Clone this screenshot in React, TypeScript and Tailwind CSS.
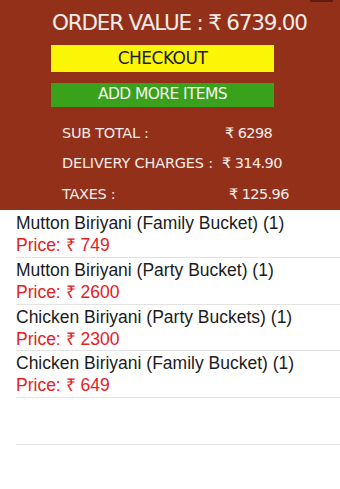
import React from "react";

const items = [
  { name: "Mutton Biriyani (Family Bucket) (1)", price: "749" },
  { name: "Mutton Biriyani (Party Bucket) (1)", price: "2600" },
  { name: "Chicken Biriyani (Party Buckets) (1)", price: "2300" },
  { name: "Chicken Biriyani (Family Bucket) (1)", price: "649" },
];

export default function App() {
  return (
    <div className="w-[340px] h-[489px] bg-white overflow-hidden relative">
      <div className="absolute right-[7px] top-0 w-[23px] h-[2px] bg-[#5e1b10]" />
      <div
        className="h-[210px] bg-[#93301a] pl-[51px] pt-[8px] flex flex-col"
        style={{ fontFamily: '"DejaVu Sans", "Noto Sans", sans-serif' }}
      >
        <div className="text-[21.5px] leading-[30px] text-[#f4ebe6] pl-[1px] tracking-[-1.2px] whitespace-nowrap">
          ORDER VALUE : ₹ 6739.00
        </div>
        <div className="mt-[7px] w-[223px] h-[28px] bg-[#fbf605] flex items-center justify-center text-[17px] text-[#1d1b3d] tracking-[-0.5px]">
          CHECKOUT
        </div>
        <div className="mt-[11px] w-[223px] h-[25px] bg-[#3aa11d] flex items-center justify-center text-[15.5px] text-[#f4f4ec] tracking-[-0.6px]">
          ADD MORE ITEMS
        </div>
        <div className="mt-[12px] pl-[11px] flex flex-col text-[14.5px] text-[#f6ede8]">
          <div className="h-[30.5px] flex items-center">
            <span className="w-[163px] tracking-[-0.3px]">SUB TOTAL :</span>
            <span className="tracking-[-0.6px]">₹ 6298</span>
          </div>
          <div className="h-[30.5px] flex items-center">
            <span className="w-[160px] tracking-[-0.2px]">DELIVERY CHARGES :</span>
            <span className="tracking-[-0.6px]">₹ 314.90</span>
          </div>
          <div className="h-[30.5px] flex items-center">
            <span className="w-[167px] tracking-[-0.3px]">TAXES :</span>
            <span className="tracking-[-0.6px]">₹ 125.96</span>
          </div>
        </div>
      </div>
      <div
        className="pt-[1px] flex flex-col"
        style={{ fontFamily: '"Liberation Sans", Arial, sans-serif' }}
      >
        {items.map((it) => (
          <div key={it.name} className="pl-[16px]">
            <div className="h-[46.75px] border-b border-[#e3e3e3] pt-[1px]">
              <div className="text-[17.5px] leading-[22px] text-[#1c1c1c] whitespace-nowrap">{it.name}</div>
              <div className="text-[17.5px] leading-[22px] text-[#e4211d]">Price: ₹ {it.price}</div>
            </div>
          </div>
        ))}
        <div className="pl-[16px]">
          <div className="h-[46.75px] border-b border-[#e3e3e3]" />
        </div>
      </div>
    </div>
  );
}
